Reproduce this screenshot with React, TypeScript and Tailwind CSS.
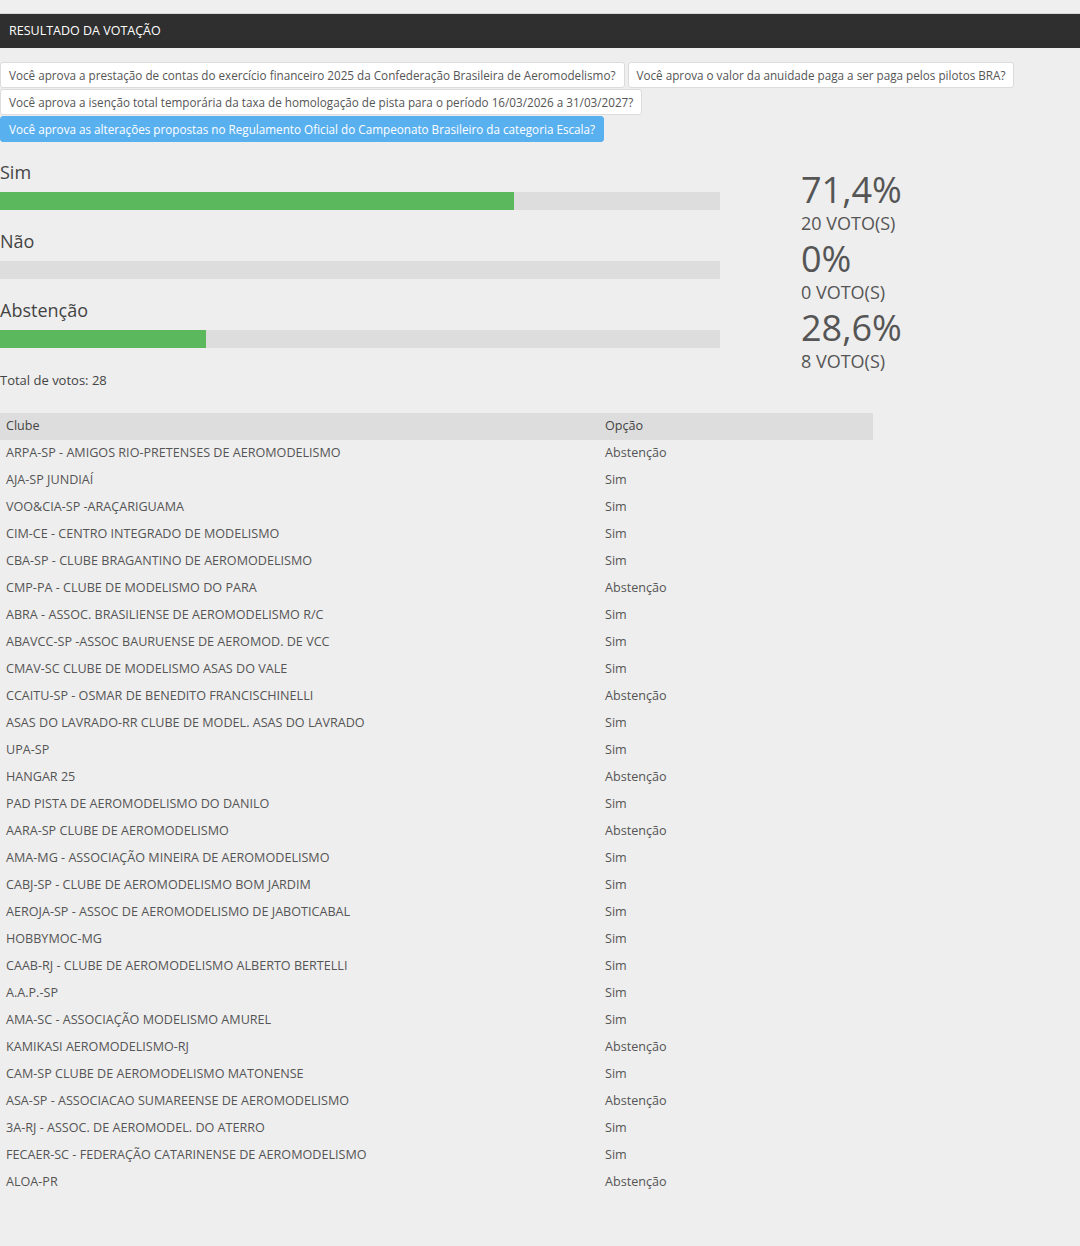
const questions = [
  { label: 'Você aprova a prestação de contas do exercício financeiro 2025 da Confederação Brasileira de Aeromodelismo?', active: false },
  { label: 'Você aprova o valor da anuidade paga a ser paga pelos pilotos BRA?', active: false },
  { label: 'Você aprova a isenção total temporária da taxa de homologação de pista para o período 16/03/2026 a 31/03/2027?', active: false },
  { label: 'Você aprova as alterações propostas no Regulamento Oficial do Campeonato Brasileiro da categoria Escala?', active: true },
];

const results = [
  { label: 'Sim', pct: 71.4, text: '71,4%', votes: 20 },
  { label: 'Não', pct: 0, text: '0%', votes: 0 },
  { label: 'Abstenção', pct: 28.6, text: '28,6%', votes: 8 },
];

const votes: [string, string][] = [
  ['ARPA-SP - AMIGOS RIO-PRETENSES DE AEROMODELISMO', 'Abstenção'],
  ['AJA-SP JUNDIAÍ', 'Sim'],
  ['VOO&CIA-SP -ARAÇARIGUAMA', 'Sim'],
  ['CIM-CE - CENTRO INTEGRADO DE MODELISMO', 'Sim'],
  ['CBA-SP - CLUBE BRAGANTINO DE AEROMODELISMO', 'Sim'],
  ['CMP-PA - CLUBE DE MODELISMO DO PARA', 'Abstenção'],
  ['ABRA - ASSOC. BRASILIENSE DE AEROMODELISMO R/C', 'Sim'],
  ['ABAVCC-SP -ASSOC BAURUENSE DE AEROMOD. DE VCC', 'Sim'],
  ['CMAV-SC CLUBE DE MODELISMO ASAS DO VALE', 'Sim'],
  ['CCAITU-SP - OSMAR DE BENEDITO FRANCISCHINELLI', 'Abstenção'],
  ['ASAS DO LAVRADO-RR CLUBE DE MODEL. ASAS DO LAVRADO', 'Sim'],
  ['UPA-SP', 'Sim'],
  ['HANGAR 25', 'Abstenção'],
  ['PAD PISTA DE AEROMODELISMO DO DANILO', 'Sim'],
  ['AARA-SP CLUBE DE AEROMODELISMO', 'Abstenção'],
  ['AMA-MG - ASSOCIAÇÃO MINEIRA DE AEROMODELISMO', 'Sim'],
  ['CABJ-SP - CLUBE DE AEROMODELISMO BOM JARDIM', 'Sim'],
  ['AEROJA-SP - ASSOC DE AEROMODELISMO DE JABOTICABAL', 'Sim'],
  ['HOBBYMOC-MG', 'Sim'],
  ['CAAB-RJ - CLUBE DE AEROMODELISMO ALBERTO BERTELLI', 'Sim'],
  ['A.A.P.-SP', 'Sim'],
  ['AMA-SC - ASSOCIAÇÃO MODELISMO AMUREL', 'Sim'],
  ['KAMIKASI AEROMODELISMO-RJ', 'Abstenção'],
  ['CAM-SP CLUBE DE AEROMODELISMO MATONENSE', 'Sim'],
  ['ASA-SP - ASSOCIACAO SUMAREENSE DE AEROMODELISMO', 'Abstenção'],
  ['3A-RJ - ASSOC. DE AEROMODEL. DO ATERRO', 'Sim'],
  ['FECAER-SC - FEDERAÇÃO CATARINENSE DE AEROMODELISMO', 'Sim'],
  ['ALOA-PR', 'Abstenção'],
];

function App() {
  return (
    <div className="min-h-[1246px] bg-[#eeeeee] font-['Open_Sans',sans-serif] text-[#444]">
      {/* Top strip */}
      <div className="h-[14px] border-b border-[#d6d6d6] bg-[#efefef]" />

      {/* Header */}
      <header className="h-[34px] bg-[#2f2f2f] px-[9px] flex items-center">
        <h1 className="mt-[1px] text-[12.5px] text-white">RESULTADO DA VOTAÇÃO</h1>
      </header>

      {/* Question tabs */}
      <div className="mt-[14px] flex flex-wrap gap-x-[3px] gap-y-[1px]">
        {questions.map((q) => (
          <button
            key={q.label}
            className={`rounded-[3px] border px-[8px] py-[3px] text-[11.7px] leading-[18px] ${
              q.active
                ? 'border-[#59b0ef] bg-[#59b0ef] text-white'
                : 'border-[#dcdcdc] bg-white text-[#555]'
            }`}
          >
            {q.label}
          </button>
        ))}
      </div>

      {/* Results */}
      <div className="mt-[18px]">
        {results.map((r) => (
          <div key={r.label} className="flex h-[69px]">
            <div className="w-[720px]">
              <div className="text-[18px] leading-[24px] text-[#444]">{r.label}</div>
              <div className="mt-[8px] h-[18px] bg-[#dddddd]">
                <div className="h-full bg-[#5cb85c]" style={{ width: `${r.pct}%` }} />
              </div>
            </div>
            <div className="ml-[81px] pt-[12px]">
              <div className="text-[36px] leading-[36px] text-[#555]">{r.text}</div>
              <div className="mt-[4px] text-[18px] leading-[22px] text-[#555]">{r.votes} VOTO(S)</div>
            </div>
          </div>
        ))}
      </div>

      <p className="mt-[3px] text-[13px] leading-[20px] text-[#444]">Total de votos: 28</p>

      {/* Votes table */}
      <table className="mt-[23px] w-[873px] text-left text-[12.6px] text-[#555]">
        <thead>
          <tr className="h-[27px] bg-[#dddddd] text-[#444]">
            <th className="w-[599px] px-[6px] font-normal">Clube</th>
            <th className="px-[6px] font-normal">Opção</th>
          </tr>
        </thead>
        <tbody>
          {votes.map(([club, option]) => (
            <tr key={club} className="h-[27px]">
              <td className="px-[6px]">{club}</td>
              <td className="px-[6px]">{option}</td>
            </tr>
          ))}
        </tbody>
      </table>
    </div>
  );
}

export default App;
